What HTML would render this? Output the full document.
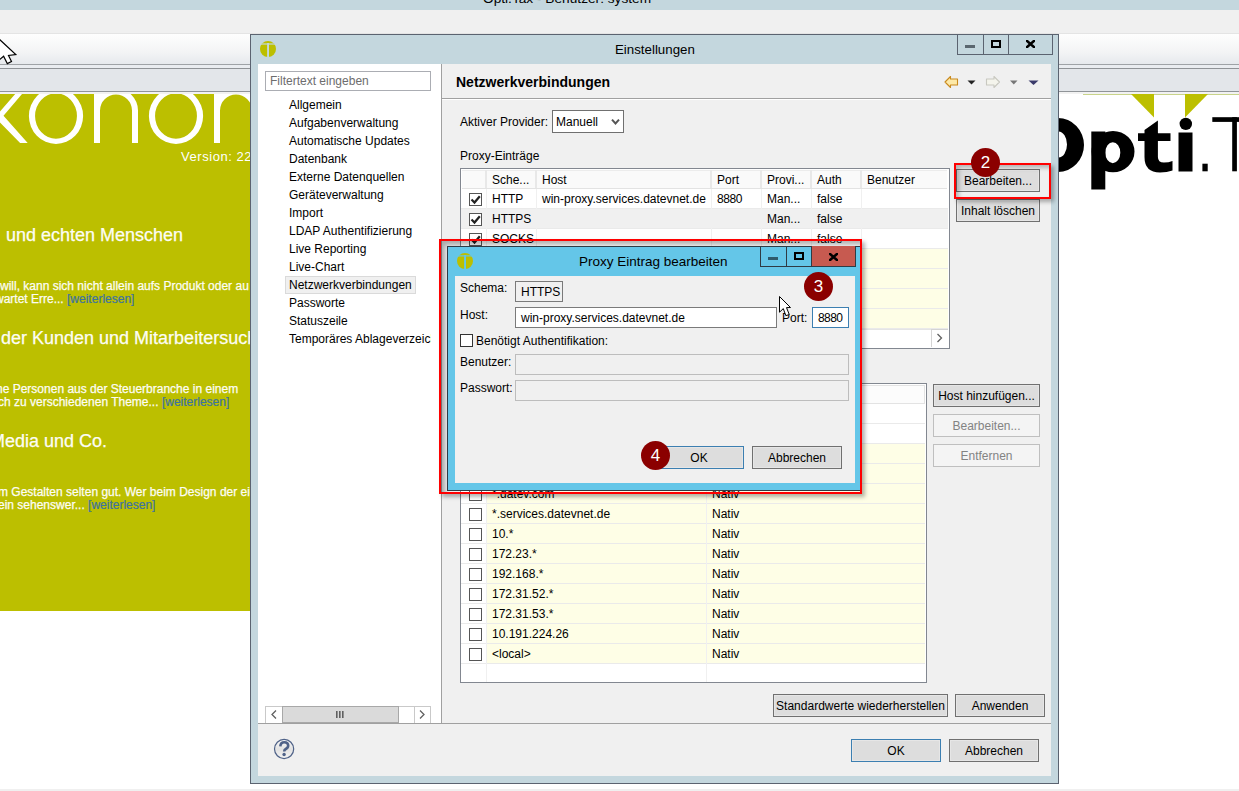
<!DOCTYPE html>
<html><head><meta charset="utf-8">
<style>
*{box-sizing:border-box;margin:0;padding:0}
html,body{width:1239px;height:791px;overflow:hidden;background:#fff;position:relative;font-family:"Liberation Sans",sans-serif;font-size:12px;color:#000}
.a{position:absolute}
.t{position:absolute;white-space:nowrap;line-height:14px}
.btn{position:absolute;background:#dddddd;border:1px solid #707070;box-shadow:inset 0 0 0 1px #e6e6e6;text-align:center;line-height:22px;white-space:nowrap}
.dis{color:#838383;background:#f4f4f4;border-color:#bfbfbf;box-shadow:none}
.cb{position:absolute;width:13px;height:13px;border:1px solid #333;background:#fff}
.red{position:absolute;border:2px solid #ff0000;box-shadow:2px 2px 4px rgba(0,0,0,.35), inset 2px 2px 4px rgba(0,0,0,.35)}
.num{position:absolute;width:29px;height:29px;border-radius:50%;background:#8b0000;color:#fff;font-size:17px;text-align:center;line-height:29px}
</style></head><body>
<!-- ===== background app ===== -->
<div class="a" style="left:0;top:0;width:1239px;height:10px;background:#c4d7de"></div>
<div class="t" style="left:483px;top:-9.5px;font-size:13.7px;line-height:16px;color:#000">Opti.Tax - Benutzer: system</div>
<div class="a" style="left:0;top:10px;width:1239px;height:24px;background:#f0f0f0"></div>
<div class="a" style="left:0;top:34px;width:1239px;height:30px;background:linear-gradient(#fefefe,#f3f4f5 60%,#e6e9ed)"></div>
<div class="a" style="left:0;top:33px;width:1239px;height:1px;background:#e4e4e4"></div>
<div class="a" style="left:0;top:64px;width:1239px;height:1px;background:#9ea2a6"></div>
<div class="a" style="left:0;top:65px;width:1239px;height:3px;background:#e9ecf0"></div>
<div class="a" style="left:0;top:68px;width:1239px;height:1px;background:#8f9397"></div>
<div class="a" style="left:0;top:69px;width:1239px;height:22px;background:#e3e6ea"></div>
<div class="a" style="left:0;top:91px;width:1239px;height:1px;background:#909498"></div>
<div class="a" style="left:0;top:92px;width:1239px;height:2px;background:#f2f2f2"></div>
<div class="a" style="left:0;top:94px;width:252px;height:517px;background:#bcbf00"></div>
<div class="a" style="left:0;top:789px;width:1239px;height:2px;background:#f0f0f0"></div>

<!-- konon logo -->
<svg class="a" style="left:0;top:94px" width="252" height="60" viewBox="0 94 252 60">
 <g fill="none" stroke="#fff" stroke-width="6">
  <path d="M97,80 V143 M97,110.5 A19,19 0 0 1 135,110.5 V143"/>
  <path d="M217,80 V143 M217,110.5 A19,19 0 0 1 255,110.5 V143"/>
 </g>
 <path fill="#fff" fill-rule="evenodd" d="M28.9,116 A27.1,28 0 1 0 83.1,116 A27.1,28 0 1 0 28.9,116 Z M35.05,116 A20.95,22.7 0 1 0 76.95,116 A20.95,22.7 0 1 0 35.05,116 Z"/><path fill="#fff" fill-rule="evenodd" d="M148.9,116 A27.1,28 0 1 0 203.1,116 A27.1,28 0 1 0 148.9,116 Z M155.05,116 A20.95,22.7 0 1 0 196.95,116 A20.95,22.7 0 1 0 155.05,116 Z"/><rect x="94" y="94" width="12" height="4" fill="#fff"/><rect x="214" y="94" width="12" height="4" fill="#fff"/>
 <polygon fill="#fff" points="15.2,94 22,94 3.5,115.8 27.7,143 20.1,143 -2,120.5 -2,113.7"/>
</svg>
<div class="t" style="left:181px;top:149px;font-size:13px;line-height:16px;color:#fff;letter-spacing:0.55px">Version: 22</div>
<div class="t" style="left:6px;top:225px;font-size:18px;line-height:20px;color:#fdfdf4;-webkit-text-stroke:0.25px #fdfdf4">und echten Menschen</div>
<div class="t" style="left:0px;top:279px;color:#fdfdf4;-webkit-text-stroke:0.25px #fdfdf4">will, kann sich nicht allein aufs Produkt oder au</div>
<div class="t" style="left:-5px;top:292px;color:#fdfdf4;-webkit-text-stroke:0.25px #fdfdf4">wartet Erre... <span style="color:#3d73a0;-webkit-text-stroke:0.2px #3d73a0">[weiterlesen]</span></div>
<div class="t" style="left:1px;top:328px;font-size:18px;line-height:20px;color:#fdfdf4;-webkit-text-stroke:0.25px #fdfdf4">der Kunden und Mitarbeitersuch</div>
<div class="t" style="left:-4px;top:382px;color:#fdfdf4;-webkit-text-stroke:0.25px #fdfdf4">he Personen aus der Steuerbranche in einem</div>
<div class="t" style="left:-2px;top:395px;color:#fdfdf4;-webkit-text-stroke:0.25px #fdfdf4">ch zu verschiedenen Theme... <span style="color:#3d73a0;-webkit-text-stroke:0.2px #3d73a0">[weiterlesen]</span></div>
<div class="t" style="left:-10px;top:431px;font-size:18px;line-height:20px;color:#fdfdf4;-webkit-text-stroke:0.25px #fdfdf4">Media und Co.</div>
<div class="t" style="left:-2px;top:485px;color:#fdfdf4;-webkit-text-stroke:0.25px #fdfdf4">m Gestalten selten gut. Wer beim Design der eig</div>
<div class="t" style="left:-2px;top:498px;color:#fdfdf4;-webkit-text-stroke:0.25px #fdfdf4">ein sehenswer... <span style="color:#3d73a0;-webkit-text-stroke:0.2px #3d73a0">[weiterlesen]</span></div>

<!-- right logo -->
<div class="a" style="left:1083px;top:94px;width:156px;height:1px;background:#c9d48a"></div>
<svg class="a" style="left:1058px;top:93px" width="181" height="100" viewBox="1058 93 181 100">
 <polygon fill="#bcbf00" points="1131,94 1154,94 1154,117.5"/>
 <polygon fill="#bcbf00" points="1185,94 1208,94 1185,117.5"/>
</svg>
<svg class="a" style="left:1058px;top:110px" width="181" height="85" viewBox="1058 110 181 85">
 <path fill="#000" fill-rule="evenodd" d="M1032,145 A26,27 0 1 0 1084,145 A26,27 0 1 0 1032,145 Z M1050,144.5 A8.5,13 0 1 1 1067,144.5 A8.5,13 0 1 1 1050,144.5 Z"/>
 <path fill="#000" d="M1091.3,131.5 H1105.3 V189.5 H1091.3 Z"/>
 <path fill="#000" fill-rule="evenodd" d="M1091.5,151.6 A21.5,20.6 0 1 0 1134.5,151.6 A21.5,20.6 0 1 0 1091.5,151.6 Z M1105.3,152.7 A7.5,10.5 0 1 1 1120.3,152.7 A7.5,10.5 0 1 1 1105.3,152.7 Z"/>
 <path fill="#000" d="M1144.5,130 L1157.9,120.5 V133.2 H1170.5 V141.1 H1157.9 V157 Q1157.9,162.5 1164,162.5 Q1168.5,162.5 1172.5,161 V170.5 Q1167,172.5 1160,172.5 Q1144.5,172.5 1144.5,157 V141.1 H1138 V133.2 H1144.5 Z"/>
 <rect x="1178.5" y="132.5" width="14" height="39" fill="#000"/>
 <circle cx="1185.8" cy="123.9" r="6.2" fill="#000"/>
 <rect x="1202.4" y="163.7" width="5.3" height="7.6" fill="#000"/>
 <rect x="1212.3" y="117.2" width="30" height="4.7" fill="#000"/>
 <rect x="1232.2" y="117.2" width="4.7" height="54.1" fill="#000"/>
</svg>

<!-- ===== Einstellungen dialog ===== -->
<div class="a" style="left:250px;top:34px;width:809px;height:750px;background:#c4d7de;border:1px solid #5b6370"></div>
<div class="t" style="left:615px;top:42px;font-size:13.3px;line-height:16px;color:#000">Einstellungen</div>
<svg class="a" style="left:258px;top:39px" width="20" height="20" viewBox="258 39 20 20">
 <circle cx="268" cy="49" r="8" fill="#bcbf00"/>
 <rect x="258" y="43.4" width="20" height="1.2" fill="#c4d7de"/>
 <rect x="267.1" y="43" width="1.9" height="16" fill="#c4d7de"/>
</svg>
<div class="a" style="left:957px;top:34px;width:96px;height:21px;border:1px solid #5b6370;border-top:none"></div>
<div class="a" style="left:983px;top:34px;width:1px;height:20px;background:#5b6370"></div>
<div class="a" style="left:1008px;top:34px;width:1px;height:20px;background:#5b6370"></div>
<div class="a" style="left:965px;top:45px;width:10px;height:3px;background:#5b6770"></div>
<div class="a" style="left:991px;top:40px;width:10px;height:8px;border:2px solid #000;border-top-width:2px"></div>
<svg class="a" style="left:1026px;top:40px" width="9" height="8" viewBox="0 0 9 8"><path d="M0,0 L9,8 M9,0 L0,8" stroke="#000" stroke-width="2.5"/></svg>

<div class="a" style="left:258px;top:64px;width:793px;height:712px;background:#f0f0f0"></div>
<div class="a" style="left:258px;top:64px;width:183px;height:659px;background:#fff"></div>
<div class="a" style="left:441px;top:64px;width:1px;height:659px;background:#a0a0a0"></div>
<div class="a" style="left:258px;top:723px;width:793px;height:1px;background:#a0a0a0"></div>
<div class="a" style="left:265px;top:71px;width:166px;height:20px;background:#fff;border:1px solid #abadb3"></div>
<div class="t" style="left:270px;top:74px;color:#6d6d6d">Filtertext eingeben</div>
<div class="a" style="left:285px;top:276px;width:131px;height:18px;background:#f0f0f0;border:1px solid #dadada"></div>
<div class="a" style="left:258px;top:64px;width:173px;height:659px;overflow:hidden">
<div class="t" style="left:31px;top:34px">Allgemein</div>
<div class="t" style="left:31px;top:52px">Aufgabenverwaltung</div>
<div class="t" style="left:31px;top:70px">Automatische Updates</div>
<div class="t" style="left:31px;top:88px">Datenbank</div>
<div class="t" style="left:31px;top:106px">Externe Datenquellen</div>
<div class="t" style="left:31px;top:124px">Geräteverwaltung</div>
<div class="t" style="left:31px;top:142px">Import</div>
<div class="t" style="left:31px;top:160px">LDAP Authentifizierung</div>
<div class="t" style="left:31px;top:178px">Live Reporting</div>
<div class="t" style="left:31px;top:196px">Live-Chart</div>
<div class="t" style="left:31px;top:214px">Netzwerkverbindungen</div>
<div class="t" style="left:31px;top:232px">Passworte</div>
<div class="t" style="left:31px;top:250px">Statuszeile</div>
<div class="t" style="left:31px;top:268px">Temporäres Ablageverzeichnis</div>
</div>
<div class="a" style="left:265px;top:706px;width:166px;height:17px;background:#fff;border:1px solid #c9c9c9;border-bottom:none"></div>
<div class="a" style="left:282px;top:706px;width:1px;height:17px;background:#c9c9c9"></div>
<div class="a" style="left:414px;top:706px;width:1px;height:17px;background:#c9c9c9"></div>
<div class="a" style="left:282px;top:706px;width:117px;height:17px;background:#dadada;border:1px solid #a8a8a8"></div>
<svg class="a" style="left:265px;top:706px" width="166" height="17" viewBox="265 706 166 17">
 <path d="M276,710.5 L272,714.5 L276,718.5" fill="none" stroke="#606060" stroke-width="1.3"/>
 <path d="M420,710.5 L424,714.5 L420,718.5" fill="none" stroke="#606060" stroke-width="1.3"/>
 <rect x="336" y="711" width="1.6" height="7" fill="#606060"/><rect x="339" y="711" width="1.6" height="7" fill="#606060"/><rect x="342" y="711" width="1.6" height="7" fill="#606060"/>
</svg>
<svg class="a" style="left:272px;top:737px" width="24" height="24" viewBox="272 737 24 24">
 <defs><linearGradient id="hg" x1="0" y1="0" x2="0" y2="1"><stop offset="0" stop-color="#fafafa"/><stop offset="0.5" stop-color="#e2e2e2"/><stop offset="1" stop-color="#f4f4f4"/></linearGradient></defs>
 <circle cx="284.1" cy="749" r="9.6" fill="url(#hg)" stroke="#4f6288" stroke-width="1.2"/>
 <path d="M280.3,746.3 Q280.6,742.2 284.3,742.2 Q288.2,742.2 288.2,745.6 Q288.2,747.8 285.8,749 Q284.2,749.8 284.2,751.6" fill="none" stroke="#4f6288" stroke-width="2.6"/>
 <circle cx="284.1" cy="754.5" r="1.7" fill="#4f6288"/>
</svg>
<div class="btn" style="left:851px;top:739px;width:90px;height:23px;border-color:#3c7fb1">OK</div>
<div class="btn" style="left:949px;top:739px;width:90px;height:23px">Abbrechen</div>
<div class="btn" style="left:773px;top:694px;width:175px;height:23px">Standardwerte wiederherstellen</div>
<div class="btn" style="left:955px;top:694px;width:90px;height:23px">Anwenden</div>
<div class="t" style="left:456px;top:74px;font-size:14px;line-height:16px;font-weight:bold">Netzwerkverbindungen</div>
<div class="a" style="left:442px;top:98px;width:609px;height:1px;background:#a0a0a0"></div>
<div class="a" style="left:442px;top:99px;width:609px;height:1px;background:#fff"></div>
<div class="t" style="left:460px;top:115px;">Aktiver Provider:</div>
<div class="a" style="left:552px;top:110px;width:72px;height:23px;background:#fff;border:1px solid #707070"></div>
<div class="t" style="left:556px;top:115px;">Manuell</div>
<svg class="a" style="left:611px;top:118px" width="9" height="8" viewBox="0 0 9 8"><path d="M1,1.6 L4.5,5.4 L8,1.6" fill="none" stroke="#555" stroke-width="2"/></svg>
<div class="t" style="left:460px;top:149px;">Proxy-Einträge</div>

<!-- upper table -->
<div class="a" style="left:460px;top:168px;width:490px;height:181px;background:#fff;border:1px solid #828790"></div>
<div class="a" style="left:462px;top:170px;width:485px;height:19px;background:#fafafa;border-top:1px solid #ececec;border-bottom:1px solid #e3e3e3"></div>
<div class="a" style="left:485px;top:170px;width:2px;height:18px;background:#e8e8e8"></div>
<div class="a" style="left:535px;top:170px;width:2px;height:18px;background:#e8e8e8"></div>
<div class="a" style="left:710px;top:170px;width:2px;height:18px;background:#e8e8e8"></div>
<div class="a" style="left:760px;top:170px;width:2px;height:18px;background:#e8e8e8"></div>
<div class="a" style="left:810px;top:170px;width:2px;height:18px;background:#e8e8e8"></div>
<div class="a" style="left:860px;top:170px;width:2px;height:18px;background:#e8e8e8"></div>
<div class="t" style="left:492px;top:173px;">Sche...</div>
<div class="t" style="left:542px;top:173px;">Host</div>
<div class="t" style="left:717px;top:173px;">Port</div>
<div class="t" style="left:767px;top:173px;">Provi...</div>
<div class="t" style="left:817px;top:173px;">Auth</div>
<div class="t" style="left:867px;top:173px;">Benutzer</div>
<div class="a" style="left:461px;top:189px;width:487px;height:20px;background:#fff;border-bottom:1px solid #eaeaea"></div>
<div class="a" style="left:461px;top:209px;width:487px;height:20px;background:#f0f0f0;border-bottom:1px solid #eaeaea"></div>
<div class="a" style="left:461px;top:229px;width:487px;height:20px;background:#fff;border-bottom:1px solid #eaeaea"></div>
<div class="a" style="left:461px;top:249px;width:487px;height:20px;background:#fefee6;border-bottom:1px solid #eaeaea"></div>
<div class="a" style="left:461px;top:269px;width:487px;height:20px;background:#fefee6;border-bottom:1px solid #eaeaea"></div>
<div class="a" style="left:461px;top:289px;width:487px;height:20px;background:#fefee6;border-bottom:1px solid #eaeaea"></div>
<div class="a" style="left:461px;top:309px;width:487px;height:20px;background:#fefee6;border-bottom:1px solid #eaeaea"></div>
<div class="a" style="left:486px;top:189px;width:1px;height:140px;background:#f0f0f0"></div>
<div class="a" style="left:536px;top:189px;width:1px;height:140px;background:#f0f0f0"></div>
<div class="a" style="left:711px;top:189px;width:1px;height:140px;background:#f0f0f0"></div>
<div class="a" style="left:761px;top:189px;width:1px;height:140px;background:#f0f0f0"></div>
<div class="a" style="left:811px;top:189px;width:1px;height:140px;background:#f0f0f0"></div>
<div class="a" style="left:861px;top:189px;width:1px;height:140px;background:#f0f0f0"></div>
<div class="cb" style="left:469px;top:193px;border-color:#555"></div>
<svg class="a" style="left:469px;top:193px" width="13" height="13" viewBox="0 0 13 13"><path d="M2.5,6.5 L5.5,9.5 L10.8,3.2" fill="none" stroke="#222" stroke-width="2.2"/></svg>
<div class="t" style="left:492px;top:192px;">HTTP</div>
<div class="t" style="left:542px;top:192px;">win-proxy.services.datevnet.de</div>
<div class="t" style="left:717px;top:192px;letter-spacing:-0.4px">8880</div>
<div class="t" style="left:767px;top:192px;">Man...</div>
<div class="t" style="left:817px;top:192px;">false</div>
<div class="cb" style="left:469px;top:213px;border-color:#555"></div>
<svg class="a" style="left:469px;top:213px" width="13" height="13" viewBox="0 0 13 13"><path d="M2.5,6.5 L5.5,9.5 L10.8,3.2" fill="none" stroke="#222" stroke-width="2.2"/></svg>
<div class="t" style="left:492px;top:212px;">HTTPS</div>
<div class="t" style="left:542px;top:212px;"></div>
<div class="t" style="left:717px;top:212px;"></div>
<div class="t" style="left:767px;top:212px;">Man...</div>
<div class="t" style="left:817px;top:212px;">false</div>
<div class="cb" style="left:469px;top:233px;border-color:#555"></div>
<svg class="a" style="left:469px;top:233px" width="13" height="13" viewBox="0 0 13 13"><path d="M2.5,6.5 L5.5,9.5 L10.8,3.2" fill="none" stroke="#222" stroke-width="2.2"/></svg>
<div class="t" style="left:492px;top:232px;">SOCKS</div>
<div class="t" style="left:542px;top:232px;"></div>
<div class="t" style="left:717px;top:232px;"></div>
<div class="t" style="left:767px;top:232px;">Man...</div>
<div class="t" style="left:817px;top:232px;">false</div>
<div class="a" style="left:461px;top:329px;width:487px;height:19px;background:#fff;border-top:1px solid #e5e5e5"></div>
<div class="a" style="left:931px;top:329px;width:17px;height:18px;border-left:1px solid #d4d4d4;border-top:1px solid #d4d4d4"></div>
<svg class="a" style="left:931px;top:329px" width="17" height="19" viewBox="0 0 17 19"><path d="M6.5,5 L10.5,9 L6.5,13" fill="none" stroke="#606060" stroke-width="1.3"/></svg>

<!-- lower table -->
<div class="a" style="left:460px;top:383px;width:467px;height:300px;background:#fff;border:1px solid #828790"></div>
<div class="a" style="left:462px;top:385px;width:463px;height:19px;background:#fcfcfc;border:1px solid #e3e3e3"></div>
<div class="a" style="left:461px;top:404px;width:464px;height:20px;background:#fff;border-bottom:1px solid #eaeaea"></div>
<div class="a" style="left:461px;top:404px;width:25px;height:19px;background:#fff"></div>
<div class="a" style="left:461px;top:424px;width:464px;height:20px;background:#fff;border-bottom:1px solid #eaeaea"></div>
<div class="a" style="left:461px;top:424px;width:25px;height:19px;background:#fff"></div>
<div class="a" style="left:461px;top:444px;width:464px;height:20px;background:#fefee6;border-bottom:1px solid #eaeaea"></div>
<div class="a" style="left:461px;top:444px;width:25px;height:19px;background:#fff"></div>
<div class="a" style="left:461px;top:464px;width:464px;height:20px;background:#fefee6;border-bottom:1px solid #eaeaea"></div>
<div class="a" style="left:461px;top:464px;width:25px;height:19px;background:#fff"></div>
<div class="a" style="left:461px;top:484px;width:464px;height:20px;background:#fefee6;border-bottom:1px solid #eaeaea"></div>
<div class="a" style="left:461px;top:484px;width:25px;height:19px;background:#fff"></div>
<div class="cb" style="left:469px;top:488px;border-color:#555"></div>
<div class="t" style="left:492px;top:487px;">*.datev.com</div>
<div class="t" style="left:712px;top:487px;">Nativ</div>
<div class="a" style="left:461px;top:504px;width:464px;height:20px;background:#fefee6;border-bottom:1px solid #eaeaea"></div>
<div class="a" style="left:461px;top:504px;width:25px;height:19px;background:#fff"></div>
<div class="cb" style="left:469px;top:508px;border-color:#555"></div>
<div class="t" style="left:492px;top:507px;">*.services.datevnet.de</div>
<div class="t" style="left:712px;top:507px;">Nativ</div>
<div class="a" style="left:461px;top:524px;width:464px;height:20px;background:#fefee6;border-bottom:1px solid #eaeaea"></div>
<div class="a" style="left:461px;top:524px;width:25px;height:19px;background:#fff"></div>
<div class="cb" style="left:469px;top:528px;border-color:#555"></div>
<div class="t" style="left:492px;top:527px;">10.*</div>
<div class="t" style="left:712px;top:527px;">Nativ</div>
<div class="a" style="left:461px;top:544px;width:464px;height:20px;background:#fefee6;border-bottom:1px solid #eaeaea"></div>
<div class="a" style="left:461px;top:544px;width:25px;height:19px;background:#fff"></div>
<div class="cb" style="left:469px;top:548px;border-color:#555"></div>
<div class="t" style="left:492px;top:547px;">172.23.*</div>
<div class="t" style="left:712px;top:547px;">Nativ</div>
<div class="a" style="left:461px;top:564px;width:464px;height:20px;background:#fefee6;border-bottom:1px solid #eaeaea"></div>
<div class="a" style="left:461px;top:564px;width:25px;height:19px;background:#fff"></div>
<div class="cb" style="left:469px;top:568px;border-color:#555"></div>
<div class="t" style="left:492px;top:567px;">192.168.*</div>
<div class="t" style="left:712px;top:567px;">Nativ</div>
<div class="a" style="left:461px;top:584px;width:464px;height:20px;background:#fefee6;border-bottom:1px solid #eaeaea"></div>
<div class="a" style="left:461px;top:584px;width:25px;height:19px;background:#fff"></div>
<div class="cb" style="left:469px;top:588px;border-color:#555"></div>
<div class="t" style="left:492px;top:587px;">172.31.52.*</div>
<div class="t" style="left:712px;top:587px;">Nativ</div>
<div class="a" style="left:461px;top:604px;width:464px;height:20px;background:#fefee6;border-bottom:1px solid #eaeaea"></div>
<div class="a" style="left:461px;top:604px;width:25px;height:19px;background:#fff"></div>
<div class="cb" style="left:469px;top:608px;border-color:#555"></div>
<div class="t" style="left:492px;top:607px;">172.31.53.*</div>
<div class="t" style="left:712px;top:607px;">Nativ</div>
<div class="a" style="left:461px;top:624px;width:464px;height:20px;background:#fefee6;border-bottom:1px solid #eaeaea"></div>
<div class="a" style="left:461px;top:624px;width:25px;height:19px;background:#fff"></div>
<div class="cb" style="left:469px;top:628px;border-color:#555"></div>
<div class="t" style="left:492px;top:627px;">10.191.224.26</div>
<div class="t" style="left:712px;top:627px;">Nativ</div>
<div class="a" style="left:461px;top:644px;width:464px;height:20px;background:#fefee6;border-bottom:1px solid #eaeaea"></div>
<div class="a" style="left:461px;top:644px;width:25px;height:19px;background:#fff"></div>
<div class="cb" style="left:469px;top:648px;border-color:#555"></div>
<div class="t" style="left:492px;top:647px;">&lt;local&gt;</div>
<div class="t" style="left:712px;top:647px;">Nativ</div>
<div class="a" style="left:486px;top:404px;width:1px;height:278px;background:#f0f0f0"></div>
<div class="a" style="left:706px;top:404px;width:1px;height:278px;background:#f0f0f0"></div>

<!-- right buttons -->
<div class="btn" style="left:956px;top:169px;width:84px;height:23px">Bearbeiten...</div>
<div class="btn" style="left:956px;top:199px;width:84px;height:23px">Inhalt löschen</div>
<div class="btn" style="left:933px;top:384px;width:107px;height:23px">Host hinzufügen...</div>
<div class="btn dis" style="left:933px;top:414px;width:107px;height:23px">Bearbeiten...</div>
<div class="btn dis" style="left:933px;top:444px;width:107px;height:23px">Entfernen</div>

<!-- toolbar icons -->
<svg class="a" style="left:940px;top:70px" width="105" height="24" viewBox="940 70 105 24">
 <path d="M945,82 L950.5,76.5 L950.5,79 L957.5,79 L957.5,85 L950.5,85 L950.5,87.5 Z" fill="#fde9a8" stroke="#c98a1e" stroke-width="1.1" stroke-linejoin="round"/>
 <path d="M967.5,80.5 L975.5,80.5 L971.5,84.5 Z" fill="#222"/>
 <path d="M999.5,82 L994,76.5 L994,79 L986.5,79 L986.5,85 L994,85 L994,87.5 Z" fill="#f4f4ec" stroke="#c8c8c0" stroke-width="1.1" stroke-linejoin="round"/>
 <path d="M1010,80.5 L1017.5,80.5 L1013.8,84.5 Z" fill="#777"/>
 <path d="M1028.5,80.5 L1038.5,80.5 L1033.5,85 Z" fill="#3a3a6a"/>
</svg>

<!-- red frame 2 (Bearbeiten) -->
<div class="a" style="left:954px;top:163px;width:97px;height:36px;border:2px solid #ff0000;box-shadow:3px 3px 4px rgba(0,0,0,.3)"></div>
<div class="a" style="left:956px;top:165px;width:93px;height:32px;box-shadow:inset 3px 3px 4px rgba(0,0,0,.25)"></div>

<!-- Proxy dialog -->
<div class="a" style="left:441px;top:241px;width:419px;height:251px;box-shadow:inset 4px 4px 5px rgba(0,0,0,.30)"></div>
<div class="a" style="left:447px;top:246px;width:415px;height:245px;background:#64c6e8;border:1px solid #2f3b44"></div>
<div class="a" style="left:455px;top:276px;width:400px;height:207px;background:#f0f0f0"></div>
<svg class="a" style="left:455px;top:251px" width="20" height="20" viewBox="455 251 20 20">
 <circle cx="465" cy="261" r="8" fill="#bcbf00"/>
 <rect x="455" y="255.3" width="20" height="1.2" fill="#64c6e8"/>
 <rect x="464.1" y="255" width="1.9" height="16" fill="#64c6e8"/>
</svg>
<div class="t" style="left:579px;top:254px;font-size:13.5px;line-height:16px">Proxy Eintrag bearbeiten</div>
<div class="a" style="left:760px;top:246px;width:96px;height:21px;border:1px solid #2f3b44;border-top:none"></div>
<div class="a" style="left:786px;top:246px;width:1px;height:20px;background:#2f3b44"></div>
<div class="a" style="left:811px;top:246px;width:1px;height:20px;background:#2f3b44"></div>
<div class="a" style="left:812px;top:246px;width:43px;height:20px;background:#c75a50"></div>
<div class="a" style="left:768px;top:257px;width:10px;height:3px;background:#2e5a6c"></div>
<div class="a" style="left:794px;top:252px;width:10px;height:8px;border:2px solid #000"></div>
<svg class="a" style="left:829px;top:252.5px" width="9" height="8" viewBox="0 0 9 8"><path d="M0,0 L9,8 M9,0 L0,8" stroke="#000" stroke-width="2.5"/></svg>
<div class="t" style="left:460px;top:281px;">Schema:</div>
<div class="a" style="left:515px;top:281px;width:48px;height:21px;background:#f0f0f0;border:1px solid #7a7a7a"></div>
<div class="t" style="left:521px;top:285px;">HTTPS</div>
<div class="t" style="left:460px;top:308px;">Host:</div>
<div class="a" style="left:515px;top:307px;width:262px;height:21px;background:#fff;border:1px solid #7a7a7a"></div>
<div class="t" style="left:521px;top:311px;">win-proxy.services.datevnet.de</div>
<div class="t" style="left:782px;top:311px;">Port:</div>
<div class="a" style="left:812px;top:307px;width:37px;height:21px;background:#fff;border:1px solid #3c7fb1"></div>
<div class="t" style="left:818px;top:311px;letter-spacing:-0.6px">8880</div>
<div class="cb" style="left:460px;top:334px;border-color:#333"></div>
<div class="t" style="left:476px;top:334px;">Benötigt Authentifikation:</div>
<div class="t" style="left:460px;top:355px;">Benutzer:</div>
<div class="a" style="left:515px;top:354px;width:334px;height:21px;background:#f0f0f0;border:1px solid #bdbdbd"></div>
<div class="t" style="left:460px;top:381px;">Passwort:</div>
<div class="a" style="left:515px;top:380px;width:334px;height:21px;background:#f0f0f0;border:1px solid #bdbdbd"></div>
<div class="btn" style="left:654px;top:446px;width:90px;height:23px;border-color:#3c7fb1">OK</div>
<div class="btn" style="left:752px;top:446px;width:90px;height:23px">Abbrechen</div>

<!-- red frame around proxy dialog -->
<div class="a" style="left:439px;top:239px;width:423px;height:255px;border:2px solid #ff0000;box-shadow:3px 3px 4px rgba(0,0,0,.3)"></div>

<!-- number circles -->
<div class="num" style="left:971px;top:148px">2</div>
<div class="num" style="left:804px;top:272px">3</div>
<div class="num" style="left:641px;top:441px">4</div>

<!-- cursors -->
<svg class="a" style="left:0;top:0" width="1239" height="791" viewBox="0 0 1239 791">
 <path d="M-1,39 L15.8,54.6 L8.5,55.5 L11.5,61.5 L7.3,63.6 L3.6,56.3 L-1,60 Z" fill="#fff" stroke="#000" stroke-width="1.2" stroke-linejoin="miter"/>
 <path d="M779.5,296.5 L790.5,307.5 L786.5,307.6 L789.3,314.6 L785.8,315.6 L783.3,308.6 L779.5,312.2 Z" fill="#fff" stroke="#000" stroke-width="1" stroke-linejoin="miter"/>
</svg>
</body></html>
